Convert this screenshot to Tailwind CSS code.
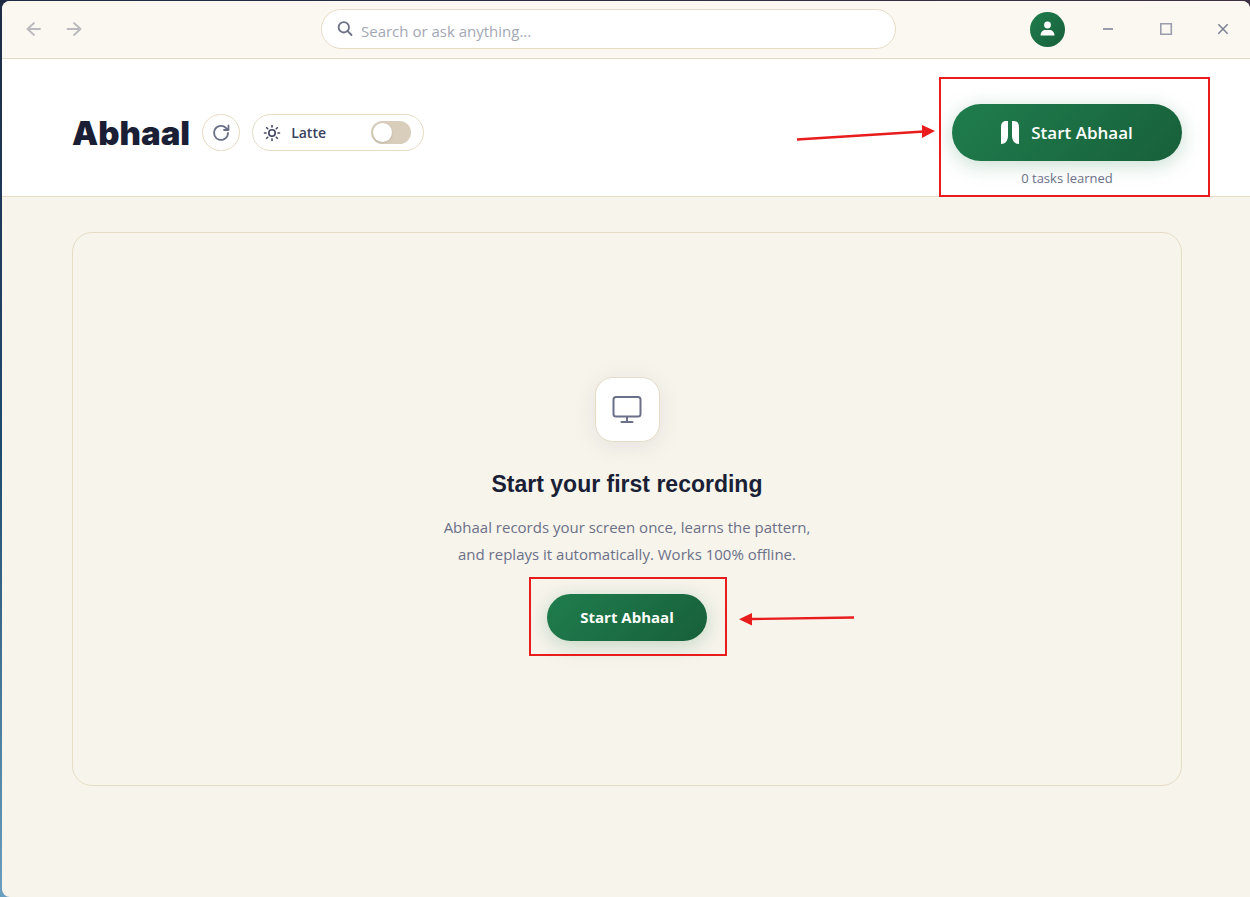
<!DOCTYPE html>
<html lang="en">
<head>
    <meta charset="UTF-8">
    <meta name="viewport" content="width=device-width, initial-scale=1.0">
    <title>Abhaal</title>
    <script src="https://cdn.jsdelivr.net/npm/@tailwindcss/browser@4"></script>
</head>
<body class="bg-linear-to-b from-[#1d2b45] via-[#1f4a70] to-[#6a9fc0] font-['Open_Sans','Noto_Sans',sans-serif] text-[#1a1f36]">
    <div class="min-h-screen pl-0.5 pt-px flex flex-col bg-linear-to-r from-transparent from-1% to-[#3d3045]">
        <div class="flex-1 flex flex-col bg-[#f7f4ec] rounded-t-lg rounded-bl-lg overflow-hidden">

            <!-- Title bar -->
            <div class="h-[58px] flex items-center pb-px bg-[#fbf8f1] border-b border-[#e5dcc5]">
                <nav class="w-[319px] shrink-0 flex gap-2 pl-4">
                    <button type="button" aria-label="Back" class="w-8 h-8 flex items-center justify-center text-[#b9b9be]">
                        <svg class="w-5 h-5" fill="none" stroke="currentColor" stroke-width="1.8" stroke-linecap="round" stroke-linejoin="round" viewBox="0 0 20 20"><path d="M16 10H3.500M10 4l-6.500 6 6.500 6"></path></svg>
                    </button>
                    <button type="button" aria-label="Forward" class="w-8 h-8 flex items-center justify-center text-[#b9b9be]">
                        <svg class="w-5 h-5" fill="none" stroke="currentColor" stroke-width="1.8" stroke-linecap="round" stroke-linejoin="round" viewBox="0 0 20 20"><path d="M3.500 10H16M10 4l6.500 6-6.500 6"></path></svg>
                    </button>
                </nav>
                <label class="flex-1 min-w-0 h-10 flex items-center gap-2 px-[15px] bg-white border border-[#e5dcc5] rounded-full">
                    <svg class="w-4 h-4 shrink-0 text-[#6b7088]" fill="none" stroke="currentColor" stroke-width="1.8" stroke-linecap="round" viewBox="0 0 16 16"><circle cx="6.800" cy="6.300" r="5.200"></circle><path d="M10.700 10.200l3.800 3.800"></path></svg>
                    <input type="text" aria-label="Search" placeholder="Search or ask anything..." class="flex-1 min-w-0 pt-1 text-[15px] outline-none placeholder:text-[#a3a7b5]">
                </label>
                <div class="w-[354px] shrink-0 flex items-center justify-end">
                    <button type="button" aria-label="Account" class="w-[35px] h-[35px] mr-3.5 flex items-center justify-center rounded-full bg-linear-135 from-[#1f7d4d] to-[#18603a] text-white">
                        <svg class="w-4 h-4" fill="currentColor" viewBox="0 0 16 16"><circle cx="7.500" cy="4" r="3.400"></circle><path d="M.5 14.500c0-3.500 2.500-5.500 5-5.500h4c2.500 0 5 2 5 5.500z"></path></svg>
                    </button>
                    <button type="button" aria-label="Minimize" class="w-[58px] h-10 flex items-center justify-center text-[#9a9dad]">
                        <svg class="w-4 h-4" fill="none" stroke="currentColor" stroke-width="2" viewBox="0 0 16 16"><path d="M3 8h10"></path></svg>
                    </button>
                    <button type="button" aria-label="Maximize" class="w-[58px] h-10 flex items-center justify-center text-[#9a9dad]">
                        <svg class="w-4 h-4" fill="none" stroke="currentColor" stroke-width="1.6" viewBox="0 0 16 16"><path d="M2.800 2.800h10.500v10.500H2.800z"></path></svg>
                    </button>
                    <button type="button" aria-label="Close" class="w-[55px] h-10 flex items-center justify-center text-[#7b8095]">
                        <svg class="w-4 h-4" fill="none" stroke="currentColor" stroke-width="1.500" viewBox="0 0 16 16"><path d="M3.300 3.300l9.400 9.400M12.700 3.300l-9.400 9.400"></path></svg>
                    </button>
                </div>
            </div>

            <!-- Header -->
            <header class="flex items-start justify-between bg-white border-b border-[#e5dcc5] pt-[45px] pb-[9px] pl-[70px] pr-[68px]">
                <div class="h-[57px] flex items-center gap-3">
                    <h1 class="font-[Inter,sans-serif] font-black text-[33px] leading-10">Abhaal</h1>
                    <button type="button" aria-label="Refresh" class="w-[38px] h-[37px] flex items-center justify-center border border-[#e5dcc5] rounded-full text-[#6b7088]">
                        <svg class="w-[18px] h-[18px]" fill="none" stroke="currentColor" stroke-width="1.8" stroke-linecap="round" stroke-linejoin="round" viewBox="0 0 18 18"><path d="M16 9a7 7 0 1 1-2-5l2.500 2M16.500 1.500V6H12"></path></svg>
                    </button>
                    <label class="w-[172px] h-[37px] flex items-center pl-2.5 pr-3 border border-[#e5dcc5] rounded-full">
                        <svg class="w-[18px] h-[18px] text-[#3f4560]" fill="none" stroke="currentColor" stroke-width="1.600" stroke-linecap="round" viewBox="0 0 18 18"><circle cx="9" cy="9" r="3.200"></circle><path d="M9 1.500v1.500M9 15v1.500M1.500 9H3M15 9h1.500M3.700 3.700l1 1M13.300 13.300l1 1M3.700 14.300l1-1M13.300 4.700l1-1"></path></svg>
                        <span class="flex-1 pl-2.5 text-sm font-semibold text-[#3a3f5c]">Latte</span>
                        <input type="checkbox" role="switch" class="appearance-none w-10 h-[23px] rounded-full bg-[#d8cebb] before:block before:w-[19px] before:h-[19px] before:m-0.5 before:rounded-full before:bg-white before:shadow-sm checked:before:ml-[19px]">
                    </label>
                </div>
                <div class="relative w-[230px] flex flex-col items-center">
                    <button type="button" class="w-full h-[57px] flex items-center justify-center gap-3 rounded-full bg-linear-135 from-[#1f7d4d] to-[#18603a] text-white text-[17px] font-semibold shadow-[0_4px_20px_rgba(31,125,77,0.25)]">
                        <svg class="w-[18px] h-[23px]" fill="currentColor" viewBox="0 0 18 23"><path d="M5 0h2v14.500C7 19.500 4.500 23 0 23V6.500C0 2.500 1.500 0 5 0zM11 0h2c3.500 0 5 2.500 5 6.500V23c-4.500 0-7-3.500-7-8.500z"></path></svg>
                        Start Abhaal
                    </button>
                    <p class="mt-2 text-[13px] leading-[18px] text-[#6b7088]">0 tasks learned</p>
                    <!-- Callout -->
                    <div class="absolute -left-[13px] -right-7 -top-[27px] -bottom-2.5 border-2 border-[#e81c1c] pointer-events-none"></div>
                    <svg class="absolute right-full top-5 mr-4 w-[140px] h-5 text-[#e81c1c]" viewBox="0 0 140 20"><path d="M1 15.500L128 7.500" stroke="currentColor" stroke-width="2.300"></path><path d="M126 1l13 6-13 7z" fill="currentColor"></path></svg>
                </div>
            </header>

            <!-- Empty state -->
            <main class="flex-1 flex flex-col pt-[35px] pb-[111px] pl-[70px] pr-[68px]">
                <section class="flex-1 flex flex-col items-center justify-center text-center border border-[#e5dcc5] rounded-[20px]">
                    <div class="w-[65px] h-[65px] flex items-center justify-center bg-white border border-[#e5dcc5] rounded-[18px] shadow-[0_4px_24px_rgba(26,31,54,0.08)]">
                        <svg class="w-8 h-8 text-[#6b7088]" fill="none" stroke="currentColor" stroke-width="2" stroke-linecap="round" viewBox="0 0 32 32"><rect x="2.500" y="3" width="27" height="19.500" rx="2.500"></rect><path d="M16 23v5M10.500 28h11"></path></svg>
                    </div>
                    <h2 class="mt-[26px] font-['Liberation_Sans',Arial,sans-serif] font-bold text-[23px] leading-8">Start your first recording</h2>
                    <p class="mt-3.5 text-[15px] leading-[27px] text-[#6b7088]">Abhaal records your screen once, learns the pattern,<br>and replays it automatically. Works 100% offline.</p>
                    <div class="relative mt-[26px]">
                        <button type="button" class="w-40 h-[47px] rounded-full bg-linear-135 from-[#1f7d4d] to-[#18603a] text-white text-[15px] font-bold shadow-[0_4px_20px_rgba(31,125,77,0.25)]">Start Abhaal</button>
                        <!-- Callout -->
                        <div class="absolute -left-[18px] -right-5 -top-[17px] -bottom-[15px] border-2 border-[#e81c1c] pointer-events-none"></div>
                        <svg class="absolute left-full top-4 ml-8 w-[116px] h-4 text-[#e81c1c]" viewBox="0 0 116 16"><path d="M12 9l103-1.500" stroke="currentColor" stroke-width="2.300"></path><path d="M13 3v12.500L0 9.300z" fill="currentColor"></path></svg>
                    </div>
                </section>
            </main>
        </div>
    </div>
</body>
</html>
